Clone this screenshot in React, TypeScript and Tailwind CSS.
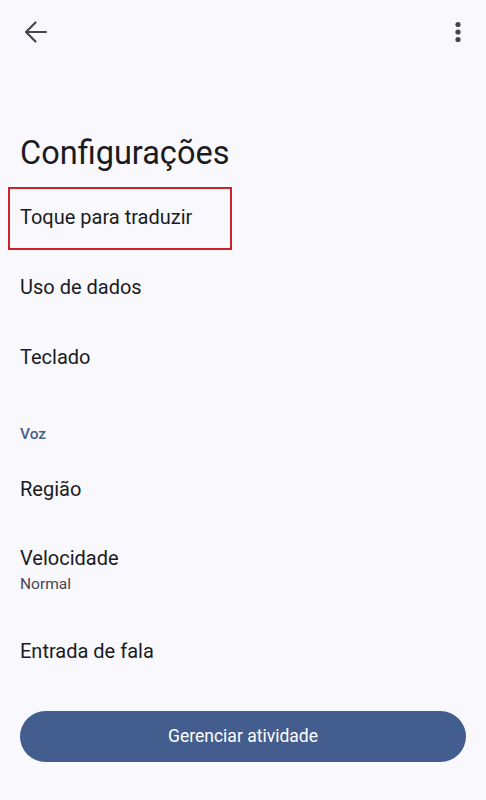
import React from "react";

function Row({ title, sub, h, boxed }: { title: string; sub?: string; h: string; boxed?: boolean }) {
  return (
    <div className={`relative flex flex-col justify-center px-5 ${h}`}>
      <div className="text-[20px] leading-6 text-[#1b1b1f]">{title}</div>
      {sub && <div className="mt-[4px] text-[15.5px] leading-5 text-[#46464f]">{sub}</div>}
      {boxed && (
        <div className="absolute left-[8px] top-[5px] h-[63px] w-[224px] border-2 border-[#d0202a]" />
      )}
    </div>
  );
}

export default function App() {
  return (
    <div
      className="flex h-[800px] w-[486px] flex-col bg-[#f8f8fd]"
      style={{ fontFamily: "Roboto, 'Noto Sans', sans-serif" }}
    >
      <div className="flex h-16 items-center justify-between px-5">
        <svg width="30" height="30" viewBox="0 0 30 30" fill="none" className="mt-[-1px]">
          <path d="M26 15H6.5M15.5 5.5L6 15l9.5 9.5" stroke="#44464f" strokeWidth="2.2" strokeLinecap="round" strokeLinejoin="round" />
        </svg>
        <svg width="12" height="24" viewBox="0 0 12 24" className="mr-[2px] mt-[-1px]">
          <circle cx="6" cy="4.5" r="2.6" fill="#44464f" />
          <circle cx="6" cy="12" r="2.6" fill="#44464f" />
          <circle cx="6" cy="19.5" r="2.6" fill="#44464f" />
        </svg>
      </div>
      <div className="px-5 pb-[9px] pt-[69px] text-[32.5px] leading-10 text-[#1b1b1f]">Configurações</div>
      <Row title="Toque para traduzir" h="h-[70px]" boxed />
      <Row title="Uso de dados" h="h-[70px]" />
      <Row title="Teclado" h="h-[70px]" />
      <div className="px-5 pb-[10px] pt-[32px] text-[15.5px] font-medium leading-5 text-[#4a5d8a]">Voz</div>
      <Row title="Região" h="h-[70px]" />
      <Row title="Velocidade" sub="Normal" h="h-[92px]" />
      <Row title="Entrada de fala" h="h-[70px]" />
      <div className="mx-5 mt-[25px] flex h-[51px] items-center justify-center rounded-full bg-[#445d8f] text-[17.5px] font-normal text-white">
        Gerenciar atividade
      </div>
    </div>
  );
}
